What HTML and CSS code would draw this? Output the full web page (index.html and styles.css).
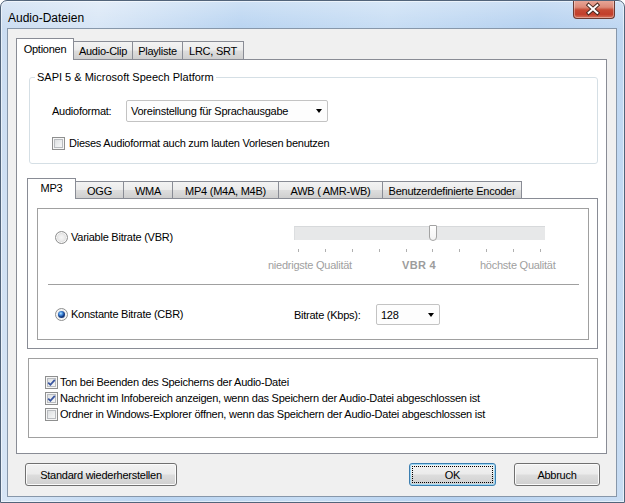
FILE: index.html
```html
<!DOCTYPE html>
<html>
<head>
<meta charset="utf-8">
<title>Audio-Dateien</title>
<link rel="stylesheet" href="styles.css">
</head>
<body>
<div class="window">
  <div class="titlebar">
    <span class="title">Audio-Dateien</span>
    <div class="close">
      <svg width="43" height="19" viewBox="0 0 43 19">
        <path d="M17 5 L26 13 M26 5 L17 13" stroke="#4a2a22" stroke-width="4" stroke-linecap="square"/>
        <path d="M17 5 L26 13 M26 5 L17 13" stroke="#ffffff" stroke-width="2" stroke-linecap="square"/>
      </svg>
    </div>
  </div>
  <div class="client">
    <div class="tabs main-tabs">
      <div class="tab active w-opt">Optionen</div>
      <div class="tab w-clip">Audio-Clip</div>
      <div class="tab w-play">Playliste</div>
      <div class="tab w-lrc">LRC, SRT</div>
    </div>
    <div class="panel main-panel">
      <fieldset class="group sapi">
        <legend>SAPI 5 &amp; Microsoft Speech Platform</legend>
        <div class="format-row">
          <span class="fmt-label">Audioformat:</span>
          <div class="combo fmt-combo"><span class="combo-text">Voreinstellung für Sprachausgabe</span><i class="arrow"></i></div>
        </div>
        <div class="check-row sapi-check"><span class="cb"></span><span>Dieses Audioformat auch zum lauten Vorlesen benutzen</span></div>
      </fieldset>

      <div class="tabs sub-tabs">
        <div class="tab active w-mp3">MP3</div>
        <div class="tab w-ogg">OGG</div>
        <div class="tab w-wma">WMA</div>
        <div class="tab w-mp4">MP4 (M4A, M4B)</div>
        <div class="tab w-awb">AWB ( AMR-WB)</div>
        <div class="tab w-enc">Benutzerdefinierte Encoder</div>
      </div>
      <div class="panel sub-panel">
        <div class="box enc-box">
          <div class="vbr">
            <div class="radio-row vbr-radio"><span class="rb"></span><span>Variable Bitrate (VBR)</span></div>
            <div class="slider">
              <div class="track"><div class="thumb"></div></div>
              <div class="ticks"><i></i><i></i><i></i><i></i><i></i><i></i><i></i><i></i><i></i><i></i></div>
              <div class="slider-labels"><span>niedrigste Qualität</span><b>VBR 4</b><span>höchste Qualität</span></div>
            </div>
          </div>
          <div class="sep"></div>
          <div class="cbr">
            <div class="radio-row cbr-radio"><span class="rb on"><span class="dot"></span></span><span>Konstante Bitrate (CBR)</span></div>
            <span class="bitrate-label">Bitrate (Kbps):</span>
            <div class="combo br-combo"><span class="combo-text">128</span><i class="arrow"></i></div>
          </div>
        </div>
      </div>

      <div class="box opts-box">
        <div class="check-row opt"><span class="cb checked"><svg width="11" height="11" viewBox="0 0 11 11"><path d="M2.2 5.6 L4.4 7.8 L8.8 2.8" fill="none" stroke="#3a56a0" stroke-width="1.8"/></svg></span><span>Ton bei Beenden des Speicherns der Audio-Datei</span></div>
        <div class="check-row opt"><span class="cb checked"><svg width="11" height="11" viewBox="0 0 11 11"><path d="M2.2 5.6 L4.4 7.8 L8.8 2.8" fill="none" stroke="#3a56a0" stroke-width="1.8"/></svg></span><span>Nachricht im Infobereich anzeigen, wenn das Speichern der Audio-Datei abgeschlossen ist</span></div>
        <div class="check-row opt"><span class="cb"></span><span>Ordner in Windows-Explorer öffnen, wenn das Speichern der Audio-Datei abgeschlossen ist</span></div>
      </div>
    </div>

    <div class="buttons">
      <div class="btn btn-std">Standard wiederherstellen</div>
      <div class="btn btn-ok default"><span class="focus">OK</span></div>
      <div class="btn btn-cancel">Abbruch</div>
    </div>
  </div>
</div>
</body>
</html>
```
FILE: styles.css
```css
* { box-sizing: border-box; }
html, body { margin: 0; padding: 0; }
body {
  width: 625px;
  height: 503px;
  overflow: hidden;
  background: #ffffff;
  font-family: "Liberation Sans", Arial, sans-serif;
  font-size: 11px;
  letter-spacing: -0.25px;
  color: #000;
}

.window {
  width: 625px;
  height: 503px;
  border: 1px solid #52647a;
  border-radius: 7px 7px 0 0;
  background:
    linear-gradient(180deg, rgba(255,255,255,0.30) 0, rgba(255,255,255,0) 28px),
    linear-gradient(100deg, #cadcf1 0%, #d8e6f6 14%, #b9d4f1 34%, #c7ddf4 55%, #b5d1f0 76%, #c9ddf3 100%);
  box-shadow: inset 0 0 0 1px rgba(255,255,255,0.55);
  display: flex;
  flex-direction: column;
  overflow: hidden;
}

.titlebar {
  height: 27px;
  flex: none;
  display: flex;
  align-items: flex-start;
  padding-left: 7px;
}
.title {
  margin-top: 10px;
  font-size: 12px;
  line-height: 15px;
  letter-spacing: 0;
  color: #000;
}
.close {
  margin-left: auto;
  margin-right: 9px;
  margin-top: -1px;
  width: 42px;
  height: 19px;
  border: 1px solid #6b3a32;
  border-top: none;
  border-radius: 0 0 4px 4px;
  background: linear-gradient(180deg, #e9a99b 0%, #dd8a78 40%, #c64a34 55%, #c23f2b 80%, #d6735c 100%);
  box-shadow: inset 0 0 0 1px rgba(255,255,255,0.35);
  display: flex;
  align-items: center;
  justify-content: center;
}
.close svg { display: block; margin-left: -2px; }

.client {
  flex: 1;
  margin: 0 7px 5px 6px;
  border: 1px solid #8797aa;
  background: #f0f0f0;
  padding: 9px 9px 0 8px;
  display: flex;
  flex-direction: column;
}

/* Tabs */
.tabs {
  display: flex;
  align-items: flex-end;
  position: relative;
  z-index: 2;
  margin-bottom: -1px;
}
.main-tabs { height: 22px; }
.sub-tabs { height: 21px; margin-top: 14px; margin-left: -1px; }

.tab {
  border: 1px solid #898c95;
  background: linear-gradient(180deg, #f3f3f3 0%, #ebebeb 48%, #dddddd 52%, #cfcfcf 100%);
  display: flex;
  align-items: center;
  justify-content: center;
  white-space: nowrap;
  margin-left: -1px;
  padding-top: 1px;
}
.tab:first-child { margin-left: 0; }
.main-tabs .tab { height: 19px; }
.sub-tabs .tab { height: 18px; }
.tab.active {
  background: #ffffff;
  border-bottom: none;
  position: relative;
  z-index: 3;
  padding-top: 0;
  padding-bottom: 2px;
}
.main-tabs .tab.active { height: 22px; }
.sub-tabs .tab.active { height: 21px; }

.w-opt { width: 58px; }
.w-clip { width: 60px; }
.w-play { width: 51px; }
.w-lrc { width: 62px; }
.w-mp3 { width: 49px; }
.w-ogg { width: 49px; }
.w-wma { width: 50px; }
.w-mp4 { width: 107px; }
.w-awb { width: 105px; }
.w-enc { width: 140px; }

.panel {
  border: 1px solid #898c95;
  background: #ffffff;
  position: relative;
  z-index: 1;
}
.main-panel {
  height: 395px;
  padding: 0 8px 0 11px;
  flex: none;
}

/* Group box */
.group {
  margin: 11px 0 0 1px;
  padding: 0 0 13px 0;
  border: 1px solid #d5dfe5;
  border-radius: 3px;
  min-width: 0;
}
.group legend {
  margin-left: 5px;
  padding: 0 2px;
  line-height: 13px;
  letter-spacing: 0;
}
.format-row {
  display: flex;
  align-items: center;
  margin: 16px 0 0 22px;
  height: 22px;
}
.fmt-label { width: 74px; }

.combo {
  display: flex;
  align-items: center;
  border: 1px solid #c3c3c3;
  border-radius: 2px;
  background: #fdfdfd;
  padding: 0 5px 0 4px;
}
.combo-text { flex: 1; white-space: nowrap; }
.arrow {
  width: 0;
  height: 0;
  border-left: 3.5px solid transparent;
  border-right: 3.5px solid transparent;
  border-top: 4px solid #000;
}
.fmt-combo { width: 202px; height: 22px; }
.br-combo { width: 64px; height: 21px; }

.check-row {
  display: flex;
  align-items: center;
  white-space: nowrap;
}
.sapi-check {
  margin: 15px 0 0 22px;
  height: 13px;
  line-height: 13px;
}
.sapi-check .cb { margin-right: 4px; }

.cb {
  width: 13px;
  height: 13px;
  flex: none;
  border: 1px solid #8e8f8f;
  background: linear-gradient(135deg, #d6d8da 0%, #eef0f1 60%, #fbfbfb 100%);
  box-shadow: inset 0 0 0 1px #f6f6f6, inset 0 0 0 2px #b9bcc0;
  display: flex;
  align-items: center;
  justify-content: center;
}
.cb svg { display: block; }

.rb {
  width: 13px;
  height: 13px;
  flex: none;
  border-radius: 50%;
  border: 1px solid #8e8f8f;
  background: radial-gradient(circle at 50% 50%, #f6f6f6 0, #ececec 3px, #d3d3d3 5.5px);
  box-shadow: inset 0 0 0 1px #f8f8f8;
  margin-right: 3px;
  display: flex;
  align-items: center;
  justify-content: center;
}
.rb.on {
  background: radial-gradient(circle at 50% 50%, #f4f4f4 0, #e9e9e9 5.5px);
}
.rb .dot {
  width: 7px;
  height: 7px;
  border-radius: 50%;
  background: radial-gradient(circle at 40% 35%, #bfe2ff 0, #4f9be4 1.5px, #2b63b8 2.6px, #153a7c 3.5px);
}

/* Sub panel */
.sub-panel {
  height: 151px;
  margin-left: -1px;
  padding: 9px 8px 0 9px;
}
.box {
  border: 1px solid #a0a0a0;
  background: #ffffff;
}
.enc-box { height: 132px; }

.vbr {
  display: flex;
  align-items: flex-start;
  padding: 17px 0 0 17px;
}
.radio-row {
  display: flex;
  align-items: center;
  white-space: nowrap;
  line-height: 13px;
}
.vbr-radio { width: 213px; margin-top: 5px; }

.slider { width: 288px; flex: none; }
.track {
  position: relative;
  margin-left: 26px;
  width: 251px;
  height: 14px;
  background: #e7e8e9;
  border-top: 1px solid #d7d9db;
  border-left: 1px solid #dcdee0;
}
.thumb {
  position: absolute;
  left: 134px;
  top: -2px;
  width: 8px;
  height: 16px;
  background: linear-gradient(180deg, #ffffff, #f3f3f3);
  border: 1px solid #a3a3a3;
  border-radius: 1px 1px 4px 4px;
}
.ticks {
  display: flex;
  justify-content: space-between;
  margin: 9px 0 0 30px;
  width: 243px;
  height: 3px;
}
.ticks i {
  display: block;
  width: 1px;
  height: 3px;
  background: #b0b0b0;
}
.slider-labels {
  display: grid;
  grid-template-columns: 134px 78px auto;
  margin-top: 7px;
  line-height: 13px;
  color: #a0a0a0;
  white-space: nowrap;
}
.slider-labels b { color: #9c9c9c; font-weight: bold; letter-spacing: 0.3px; }

.sep {
  margin: 12px 9px 0 10px;
  height: 2px;
  border-top: 1px solid #a0a0a0;
  border-bottom: 1px solid #ffffff;
}

.cbr {
  display: flex;
  align-items: center;
  height: 21px;
  margin: 18px 0 0 17px;
}
.cbr-radio { width: 239px; }
.bitrate-label { width: 82px; white-space: nowrap; }

/* Options box */
.opts-box {
  margin-top: 9px;
  height: 80px;
  padding-top: 15px;
}
.check-row.opt {
  height: 16px;
  line-height: 16px;
  padding-left: 16px;
}
.check-row.opt .cb { margin-right: 2px; }

/* Buttons */
.buttons {
  display: flex;
  margin: 9px -1px 0 0;
  padding: 0 8px 0 9px;
}
.btn {
  height: 23px;
  border: 1px solid #707070;
  border-radius: 3px;
  background: linear-gradient(180deg, #f2f2f2 0%, #ebebeb 48%, #dddddd 52%, #cfcfcf 100%);
  box-shadow: inset 0 0 0 1px #fbfbfb;
  display: flex;
  align-items: center;
  justify-content: center;
  white-space: nowrap;
}
.btn-std { width: 152px; }
.btn-ok { width: 87px; margin-left: auto; }
.btn-cancel { width: 86px; margin-left: 18px; }
.btn.default {
  border-color: #3c7fb1;
  box-shadow: inset 0 0 0 1px #9fd9f5;
  padding: 2px;
}
.focus {
  flex: 1;
  align-self: stretch;
  display: flex;
  align-items: center;
  justify-content: center;
  border: 1px dotted #000;
}
```
